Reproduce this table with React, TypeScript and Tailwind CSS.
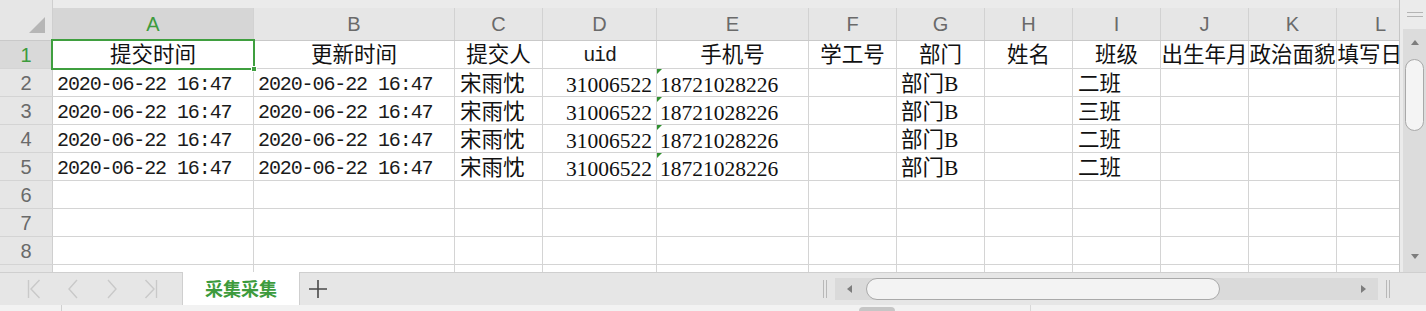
import React from "react";

type Col = { id: string; w: string };

const columns: Col[] = [
  { id: "A", w: "w-[201px]" },
  { id: "B", w: "w-[201px]" },
  { id: "C", w: "w-[88px]" },
  { id: "D", w: "w-[114px]" },
  { id: "E", w: "w-[152px]" },
  { id: "F", w: "w-[88px]" },
  { id: "G", w: "w-[88px]" },
  { id: "H", w: "w-[88px]" },
  { id: "I", w: "w-[88px]" },
  { id: "J", w: "w-[88px]" },
  { id: "K", w: "w-[88px]" },
  { id: "L", w: "w-[88px]" },
];

const titles = [
  "提交时间",
  "更新时间",
  "提交人",
  "uid",
  "手机号",
  "学工号",
  "部门",
  "姓名",
  "班级",
  "出生年月",
  "政治面貌",
  "填写日期",
];

const records = [
  { klass: "二班" },
  { klass: "三班" },
  { klass: "二班" },
  { klass: "二班" },
];

const mono = "font-['Liberation_Mono',monospace] text-[20px] tracking-[-1.1px] text-[#1a1a1a]";

const RowHead: React.FC<{ n: number; active?: boolean }> = ({ n, active }) => (
  <div
    className={`w-[53px] shrink-0 h-full border-r border-[#cfcfcf] flex items-center justify-center font-['Liberation_Sans',sans-serif] text-[20px] ${
      active ? "bg-[#d9d9d9] text-[#3d9b3d]" : "bg-[#e6e6e6] text-[#6a6a6a]"
    }`}
  >
    {n}
  </div>
);

const Cell: React.FC<{ w: string; className?: string; children?: React.ReactNode }> = ({
  w,
  className = "",
  children,
}) => (
  <div
    className={`${w} relative shrink-0 h-full border-r border-[#d4d4d4] flex items-center overflow-hidden whitespace-nowrap ${className}`}
  >
    {children}
  </div>
);

const DataRow: React.FC<{ n: number; klass: string }> = ({ n, klass }) => (
  <div className="flex h-[28px] border-b border-[#d4d4d4]">
    <RowHead n={n} />
    {columns.map((c) => {
      switch (c.id) {
        case "A":
        case "B":
          return (
            <Cell key={c.id} w={c.w} className={`pl-[4px] pt-[5px] ${mono}`}>
              2020-06-22 16:47
            </Cell>
          );
        case "C":
          return (
            <Cell key={c.id} w={c.w} className="pl-[5px] pt-[4px]">
              宋雨忱
            </Cell>
          );
        case "D":
          return (
            <Cell key={c.id} w={c.w} className="justify-end pr-[4px] pt-[5px]">
              31006522
            </Cell>
          );
        case "E":
          return (
            <Cell key={c.id} w={c.w} className="pl-[3px] pt-[5px]">
              <span className="absolute left-0 top-0 border-t-[5px] border-r-[5px] border-t-[#2f8f2f] border-r-transparent" />
              18721028226
            </Cell>
          );
        case "G":
          return (
            <Cell key={c.id} w={c.w} className="pl-[4px] pt-[4px]">
              部门B
            </Cell>
          );
        case "I":
          return (
            <Cell key={c.id} w={c.w} className="pl-[5px] pt-[4px]">
              {klass}
            </Cell>
          );
        default:
          return <Cell key={c.id} w={c.w} />;
      }
    })}
  </div>
);

const EmptyRow: React.FC<{ n: number }> = ({ n }) => (
  <div className="flex h-[28px] shrink-0 border-b border-[#d4d4d4]">
    <RowHead n={n} />
    {columns.map((c) => (
      <Cell key={c.id} w={c.w} />
    ))}
  </div>
);

const NavIcon: React.FC<{ kind: "first" | "prev" | "next" | "last" }> = ({ kind }) => (
  <svg width="14" height="20" viewBox="0 0 14 20" fill="none" stroke="#c9c9c9" strokeWidth="1.4">
    {kind === "first" && (
      <>
        <path d="M1.5 1v18" />
        <path d="M12.5 1 4 10l8.5 9" />
      </>
    )}
    {kind === "prev" && <path d="M11 1 3 10l8 9" />}
    {kind === "next" && <path d="M3 1l8 9-8 9" />}
    {kind === "last" && (
      <>
        <path d="M1.5 1 10 10l-8.5 9" />
        <path d="M12.5 1v18" />
      </>
    )}
  </svg>
);

const Grip: React.FC = () => (
  <div className="flex gap-[2px] h-[18px]">
    <span className="w-px h-full bg-[#b8b8b8]" />
    <span className="w-px h-full bg-[#b8b8b8]" />
  </div>
);

export default function App() {
  return (
    <div className="w-[1426px] h-[311px] flex flex-col overflow-hidden bg-[#e6e6e6] font-['Liberation_Serif','Noto_Sans_CJK_SC',serif] text-[21.5px] text-[#111]">
      <div className="flex h-[272px]">
        {/* sheet grid */}
        <div className="relative w-[1400px] h-full overflow-hidden bg-white border-r border-[#c6c6c6]">
          <div className="flex h-[41px] border-b border-[#c9c9c9] bg-[#ebebeb]">
            <div className="w-[53px] shrink-0 h-full bg-[#e6e6e6] border-r border-[#cfcfcf] relative">
              <svg className="absolute left-[29px] top-[17px]" width="16" height="16" viewBox="0 0 16 16">
                <path d="M16 0V16H0Z" fill="#b6b6b6" />
              </svg>
            </div>
            {columns.map((c) => (
              <div
                key={c.id}
                className={`${c.w} shrink-0 mt-[8px] h-[32px] border-r border-[#d2d2d2] flex items-center justify-center font-['Liberation_Sans',sans-serif] text-[20px] ${
                  c.id === "A" ? "bg-[#d6d6d6] text-[#3d9b3d]" : "bg-[#e6e6e6] text-[#6a6a6a]"
                }`}
              >
                {c.id}
              </div>
            ))}
          </div>

          <div className="flex h-[28px] border-b border-[#d4d4d4]">
            <RowHead n={1} active />
            {columns.map((c, i) => (
              <Cell key={c.id} w={c.w} className={`justify-center pt-[2px] ${c.id === "D" ? mono : ""}`}>
                {titles[i]}
              </Cell>
            ))}
          </div>

          {records.map((r, i) => (
            <DataRow key={i} n={i + 2} klass={r.klass} />
          ))}
          {[6, 7, 8, 9].map((n) => (
            <EmptyRow key={n} n={n} />
          ))}

          {/* active cell A1 */}
          <div className="absolute left-[51px] top-[39px] w-[204px] h-[31px] border-2 border-[#3f9f3f]" />
          <div className="absolute left-[251px] top-[66px] w-[6px] h-[6px] bg-[#3f9f3f] border border-white" />
        </div>

        {/* vertical scrollbar */}
        <div className="w-[26px] h-full flex flex-col bg-[#ebebeb]">
          <div className="h-[29px] flex flex-col items-center justify-center gap-[3px] pl-[3px]">
            <span className="w-[16px] h-px bg-[#b4b4b4]" />
            <span className="w-[16px] h-px bg-[#b4b4b4]" />
          </div>
          <div className="ml-[3px] flex-1 bg-[#dcdcdc] flex flex-col items-center">
            <svg className="mt-[11px]" width="8" height="5" viewBox="0 0 8 5">
              <path d="M4 0 8 5H0Z" fill="#7d7d7d" />
            </svg>
            <div className="mt-[14px] w-[19px] h-[72px] rounded-full bg-[#f4f4f4] border border-[#a9a9a9]" />
            <svg className="mt-auto mb-[13px]" width="8" height="5" viewBox="0 0 8 5">
              <path d="M0 0H8L4 5Z" fill="#7d7d7d" />
            </svg>
          </div>
        </div>
      </div>

      {/* sheet tabs */}
      <div className="h-[33px] flex border-t border-[#cfcfcf] bg-[#e6e6e6]">
        <div className="w-[182px] shrink-0 flex items-center pl-[14px]">
          <div className="w-[39px] flex justify-center">
            <NavIcon kind="first" />
          </div>
          <div className="w-[39px] flex justify-center">
            <NavIcon kind="prev" />
          </div>
          <div className="w-[39px] flex justify-center">
            <NavIcon kind="next" />
          </div>
          <div className="w-[39px] flex justify-center">
            <NavIcon kind="last" />
          </div>
        </div>
        <div className="w-[118px] shrink-0 -mt-px bg-white border-x border-[#cfcfcf] flex items-center justify-center font-['Noto_Sans_CJK_SC',sans-serif] font-bold text-[18px] text-[#3d9b3d]">
          采集采集
        </div>
        <div className="ml-[8px] w-[20px] flex items-center justify-center">
          <svg width="20" height="20" viewBox="0 0 20 20" stroke="#4a4a4a" strokeWidth="1.6">
            <path d="M10 1v18M1 10h18" />
          </svg>
        </div>
        <div className="flex-1" />
        <div className="w-[606px] shrink-0 flex items-center">
          <div className="ml-[3px]">
            <Grip />
          </div>
          <div className="ml-[8px] w-[543px] h-[22px] bg-[#dadada] flex items-center">
            <svg className="ml-[12px]" width="5" height="8" viewBox="0 0 5 8">
              <path d="M5 0V8L0 4Z" fill="#7d7d7d" />
            </svg>
            <div className="ml-[14px] w-[354px] h-full rounded-full bg-[#f3f3f3] border border-[#a9a9a9]" />
            <svg className="ml-auto mr-[12px]" width="5" height="8" viewBox="0 0 5 8">
              <path d="M0 0 5 4 0 8Z" fill="#7d7d7d" />
            </svg>
          </div>
          <div className="ml-[8px]">
            <Grip />
          </div>
        </div>
      </div>

      {/* status strip */}
      <div className="h-[6px] flex bg-[#f2f2f2]">
        <div className="w-[62px] border-r border-[#d0d0d0]" />
        <div className="ml-[797px] mt-[2px] w-[36px] h-[4px] rounded-t-full bg-[#c6c6c6]" />
        <div className="w-[136px] border-r border-[#d8d8d8]" />
      </div>
    </div>
  );
}
